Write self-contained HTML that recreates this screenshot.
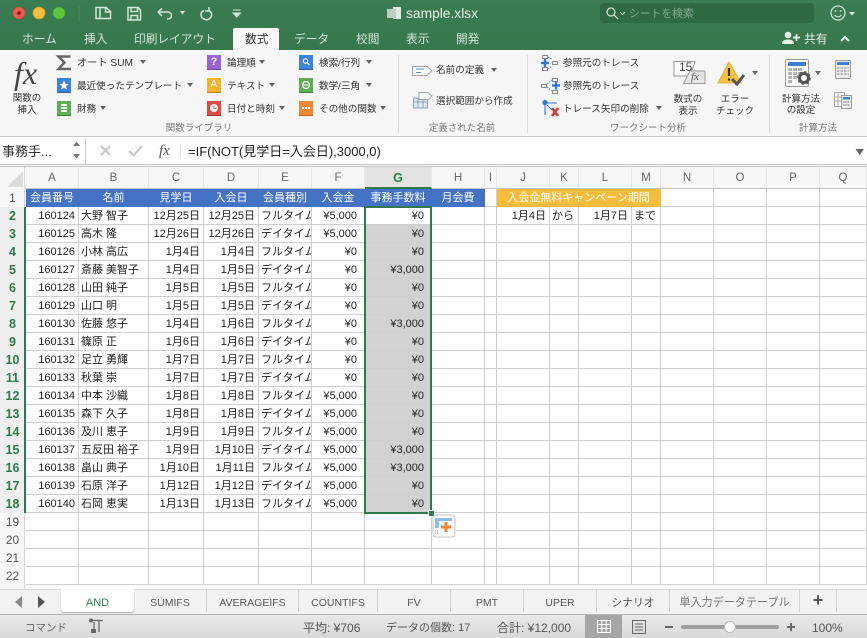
<!DOCTYPE html>
<html lang="ja"><head><meta charset="utf-8"><title>sample.xlsx</title>
<style>
*{box-sizing:border-box}
html,body{margin:0;padding:0;width:867px;height:638px;overflow:hidden;background:#fff}
body{position:relative;font-family:"Liberation Sans","Noto Sans CJK JP",sans-serif;color:#222}
.a{position:absolute}
.t{position:absolute;white-space:nowrap;line-height:14px;font-size:10px;color:#333}
.c{transform:translateX(-50%);text-align:center}
.tab{position:absolute;top:33px;font-size:11.7px;line-height:14px;color:#d5e6da;white-space:nowrap}
.g{position:absolute;top:122px;font-size:9.5px;line-height:14px;color:#777;white-space:nowrap;transform:translateX(-50%)}
.dd{position:absolute;width:0;height:0;border-left:3px solid transparent;border-right:3px solid transparent;border-top:4px solid #666}
.ch{position:absolute;top:167px;height:21px;line-height:22px;text-align:center;font-size:11.5px;color:#666;border-right:1px solid #e8e8e8}
.rh{position:absolute;left:0;width:25px;height:18px;line-height:18px;text-align:center;font-size:12px;color:#555}
.rh.s{font-weight:bold;color:#2f7a4c;font-size:12.5px;line-height:19px}
table{position:absolute;left:26px;top:189px;border-collapse:separate;border-spacing:0;table-layout:fixed;width:841px}
td{height:18px;padding:2px 2px 0;border-right:1px solid #cfcfcf;border-bottom:1px solid #cfcfcf;font-size:11px;line-height:15px;white-space:nowrap;overflow:hidden;color:#222}
td.r{text-align:right;padding-right:3px}
td.h{background:#4472c4;color:#fff;text-align:center;border-right-color:#4472c4;border-bottom-color:#4472c4;padding:2px 0 0}
td.o{background:#f6bd3c;color:#fff;text-align:center;border-color:#f6bd3c;padding:2px 0 0}
td.s{background:#d2d2d2;text-align:right;padding-right:7px}
td.w{text-align:right;padding-right:7px}
.st{position:absolute;top:589px;height:23px;line-height:28px;font-size:10.5px;color:#555;text-align:center;white-space:nowrap;border-right:1px solid #d0d0d0;overflow:hidden}
.sb{position:absolute;top:621px;font-size:12px;line-height:14px;color:#555;white-space:nowrap}
.i{font-size:9.6px}
</style></head><body>

<!-- title + tabs -->
<div class="a" style="left:0;top:0;width:867px;height:50px;background:linear-gradient(#3b7c52,#37784d)"></div>
<div class="a" style="left:233px;top:28px;width:46px;height:22px;background:#f7f7f7;border-radius:2px 2px 0 0"></div>
<svg class="a" style="left:0;top:0" width="867" height="50" viewBox="0 0 867 50">
<circle cx="19" cy="13" r="6" fill="#ee5a52" stroke="#c9403a" stroke-width=".6"/><circle cx="19" cy="13" r="1.8" fill="#7a1c18"/>
<circle cx="39" cy="13" r="6" fill="#f8bb3b" stroke="#d79c2c" stroke-width=".6"/>
<circle cx="59" cy="13" r="6" fill="#5cc43d" stroke="#46a32e" stroke-width=".6"/>
<path d="M79 6V21" stroke="#4a8a60"/>
<g fill="none" stroke="#d6e6da" stroke-width="1.5">
<path d="M96 7.500H106L110.500 11.500V18.500H96ZM100 7.500V18.500M105.500 7.500V12H110.500"/>
<path d="M128 7.500H138L140.500 10V20H128ZM131 7.500V11.500H137.500V7.500M131 20V15.500H137.500V20"/>
<path d="M158 12L162 8.500M158 12L162 16M158 12H167Q171.500 12 171.500 15.500Q171.500 19 167 19"/>
<path d="M209 10.500Q212.500 13 211.500 16Q209.500 20.500 205 19.500Q200.500 18 201 14Q201.500 11.500 204 10.500M209 7V11H205"/>
</g>
<path d="M180 11H185L182.500 14.500Z" fill="#d6e6da"/>
<path d="M233 10H240.500M233 13H240.500L236.800 17Z" stroke="#d6e6da" fill="#d6e6da"/>
<rect x="393" y="7" width="8" height="12" fill="#dfe9e2"/><rect x="387" y="9" width="9" height="9" fill="#b9cfc0"/>
<rect x="600" y="3" width="214" height="20" rx="4" fill="#2f6a45"/>
<circle cx="611" cy="12" r="4" fill="none" stroke="#d6e6da" stroke-width="1.200"/><path d="M614 15L618 19" stroke="#d6e6da" stroke-width="1.200"/>
<path d="M620 12L622.500 14.500L625 12" fill="none" stroke="#d6e6da"/>
<circle cx="838" cy="13" r="7" fill="none" stroke="#d6e6da" stroke-width="1.200"/><circle cx="835.500" cy="11" r=".9" fill="#d6e6da"/><circle cx="840.500" cy="11" r=".9" fill="#d6e6da"/><path d="M834.500 15Q838 18.500 841.500 15" fill="none" stroke="#d6e6da"/>
<path d="M849 12H855L852 15.500Z" fill="#d6e6da"/>
<circle cx="788" cy="35" r="3.300" fill="#e8f0ea"/><path d="M782 44Q782 39.500 788 39.500Q794 39.500 794 44Z" fill="#e8f0ea"/><path d="M796.500 34V41M793 37.500H800" stroke="#e8f0ea" stroke-width="1.800"/>
<path d="M841 41L845 37L849 41" fill="none" stroke="#e8f0ea" stroke-width="2"/>
</svg>
<div class="t" style="left:406px;top:6px;font-size:13.8px;line-height:16px;color:#e9f1eb">sample.xlsx</div>
<div class="t" style="left:629px;top:7px;font-size:10.8px;color:#84ab92">シートを検索</div>
<div class="tab" style="left:22px">ホーム</div>
<div class="tab" style="left:84px">挿入</div>
<div class="tab" style="left:134px">印刷レイアウト</div>
<div class="tab" style="left:245px;color:#333">数式</div>
<div class="tab" style="left:294px">データ</div>
<div class="tab" style="left:356px">校閲</div>
<div class="tab" style="left:406px">表示</div>
<div class="tab" style="left:456px">開発</div>
<div class="tab" style="left:804px;color:#e8f0ea">共有</div>

<!-- ribbon -->
<div class="a" style="left:0;top:50px;width:867px;height:87px;background:#f6f6f6;border-bottom:1px solid #c8c8c8"></div>
<div class="a" style="left:398px;top:55px;width:1px;height:78px;background:#dcdcdc"></div>
<div class="a" style="left:527px;top:55px;width:1px;height:78px;background:#dcdcdc"></div>
<div class="a" style="left:769px;top:55px;width:1px;height:78px;background:#dcdcdc"></div>
<div class="t" style="left:14px;top:55px;font-family:'Liberation Serif',serif;font-style:italic;font-size:32px;line-height:36px;color:#444">fx</div>

<svg class="a" style="left:0;top:50px" width="867" height="87" viewBox="0 50 867 87">
<path d="M70.500 56.500H58.500L64.500 62.500L58.500 69H71" fill="none" stroke="#666" stroke-width="2.500"/>
<g>
<rect x="57" y="78" width="14" height="14" fill="#3d83d9"/><path d="M57 92.500H71" stroke="#2b5c99" stroke-width="1"/><path d="M64 80.500L65.300 83.800L68.800 84L66.100 86.200L67 89.500L64 87.700L61 89.500L61.900 86.200L59.200 84L62.700 83.800Z" fill="#fff"/>
<rect x="57" y="101" width="14" height="14" fill="#5fae57"/><path d="M57 115.500H71" stroke="#3c7f38"/><rect x="61" y="104" width="6" height="2" rx="1" fill="#fff"/><rect x="61" y="107" width="6" height="2" rx="1" fill="#fff"/><rect x="61" y="110" width="6" height="2" rx="1" fill="#fff"/>
<rect x="207" y="55" width="14" height="14" fill="#9a64cf"/><path d="M207 69.500H221" stroke="#6e4499"/>
<rect x="207" y="78" width="14" height="14" fill="#f4b32f"/><path d="M207 92.500H221" stroke="#b9851c"/>
<rect x="207" y="101" width="14" height="14" fill="#df4c45"/><path d="M207 115.500H221" stroke="#a3302b"/><circle cx="214" cy="108" r="4" fill="#fff"/><path d="M214 105.500V108.300H216.500" fill="none" stroke="#df4c45"/>
<rect x="299" y="55" width="14" height="14" fill="#3d83d9"/><path d="M299 69.500H313" stroke="#2b5c99"/><circle cx="305.500" cy="61" r="2.200" fill="none" stroke="#fff" stroke-width="1.200"/><path d="M307 62.800L309.500 65" stroke="#fff" stroke-width="1.200"/>
<rect x="299" y="78" width="14" height="14" fill="#5fae57"/><path d="M299 92.500H313" stroke="#3c7f38"/><ellipse cx="306" cy="85" rx="3.500" ry="3.500" fill="none" stroke="#fff" stroke-width="1.200"/><path d="M302.500 85H309.500" stroke="#fff"/>
<rect x="299" y="101" width="14" height="14" fill="#ee8a35"/><path d="M299 115.500H313" stroke="#b8651f"/><path d="M302 108h2M305 108h2M308 108h2" stroke="#fff" stroke-width="2"/>
</g>
<path d="M412.500 66.500H427L432 70.500L427 75.500H412.500Z" fill="#fff" stroke="#9aa7b3"/><path d="M416 69H424M416 72.500H421" stroke="#4a8ad4"/>
<rect x="413.500" y="98" width="14" height="10" fill="#dfe8f2" stroke="#8fa3b7"/><path d="M413.500 102H427.500M418 98V108M423 98V108" stroke="#8fa3b7" fill="none"/><path d="M419 92.500H428L432 96L428 99.500H419Z" fill="#fff" stroke="#9aa7b3"/>
<g fill="none" stroke="#888" stroke-width="1"><rect x="542.500" y="55.500" width="5" height="3"/><rect x="552.500" y="61.500" width="5" height="3"/><rect x="542.500" y="67.500" width="5" height="3"/>
<rect x="552.500" y="78.500" width="5" height="3"/><rect x="541.500" y="84.500" width="5" height="3"/><rect x="552.500" y="90.500" width="5" height="3"/>
<path d="M548 57L552 59M548 69L552 66M547 84L552 80M547 87L552 91" stroke="#4a8ad4" stroke-dasharray="1.500 1"/></g>
<path d="M541 63H549M545 59V67" stroke="#2f79cf" stroke-width="2.400"/>
<path d="M552 85.500H560M556 81.500V89.500" stroke="#2f79cf" stroke-width="2.400"/>
<circle cx="545" cy="102.500" r="2.600" fill="#2f79cf"/><path d="M547 103H557M545 104V115M547 105L552 110" stroke="#2f79cf" stroke-width="1.100"/>
<path d="M552 108L558 116M558 108L552 116" stroke="#cf3a32" stroke-width="2.600"/>
<path d="M674 61.500H695L690 76H674Z" fill="#fff" stroke="#9a9a9a"/>
<path d="M690 71H705V83.500H683.500Z" fill="#e6e6e6" stroke="#9a9a9a"/>
<path d="M729 62L741 83H718Z" fill="#f6c342" stroke="#e2b136" stroke-linejoin="round"/><path d="M729 68V76" stroke="#333" stroke-width="2.200"/><circle cx="729" cy="79.500" r="1.200" fill="#333"/>
<path d="M732 79L737 84L744 75" fill="none" stroke="#555" stroke-width="3"/>
<rect x="785.500" y="59.500" width="23" height="27" rx="1.500" fill="#f8f8f8" stroke="#999"/><rect x="788" y="62" width="18" height="4" fill="#3d7fcb"/>
<g fill="#b5b5b5"><rect x="788" y="68" width="4" height="3"/><rect x="793" y="68" width="4" height="3"/><rect x="798" y="68" width="4" height="3"/><rect x="788" y="72" width="4" height="3"/><rect x="793" y="72" width="4" height="3"/><rect x="798" y="72" width="4" height="3"/><rect x="788" y="76" width="4" height="3"/><rect x="793" y="76" width="4" height="3"/><rect x="788" y="80" width="4" height="3"/></g>
<circle cx="804" cy="78" r="4.500" fill="none" stroke="#555" stroke-width="3"/><circle cx="804" cy="78" r="6" fill="none" stroke="#555" stroke-width="1.800" stroke-dasharray="2.300 2.400"/>
<rect x="835.500" y="60.500" width="15" height="18" rx="1" fill="#ececec" stroke="#999"/><rect x="837" y="62" width="12" height="3" fill="#3d7fcb"/><path d="M837 68H849M837 71H849M837 74H849" stroke="#aaa" stroke-width="1.500" stroke-dasharray="2.500 1"/>
<rect x="834.500" y="92.500" width="10" height="14" fill="#fff" stroke="#aaa"/><path d="M834.500 97H844.500M834.500 101H844.500M838 92.500V106" stroke="#aaa"/>
<rect x="841.500" y="95.500" width="10" height="13" fill="#ececec" stroke="#999"/><rect x="843" y="97" width="7" height="2.500" fill="#3d7fcb"/><path d="M843 102H850M843 105H850" stroke="#999" stroke-width="1.500" stroke-dasharray="1.500 .8"/>
</svg>

<div class="t" style="left:210.500px;top:55px;color:#fff;font-weight:bold;font-size:11px">?</div>
<div class="t" style="left:210.500px;top:78px;color:#fff;font-size:10px">A</div>
<div class="t" style="left:679px;top:60px;font-size:12px;color:#444">15</div>
<div class="t" style="left:691px;top:70px;font-family:'Liberation Serif',serif;font-style:italic;font-size:11px;color:#555">fx</div>

<div class="t c" style="left:27px;top:93px;line-height:11.500px;font-size:9.500px">関数の<br>挿入</div>
<div class="t i" style="left:77px;top:57px;font-size:10.200px">オート SUM</div><div class="dd" style="left:140px;top:60px"></div>
<div class="t i" style="left:77px;top:80px">最近使ったテンプレート</div><div class="dd" style="left:187px;top:83px"></div>
<div class="t i" style="left:77px;top:103px">財務</div><div class="dd" style="left:100px;top:106px"></div>
<div class="t i" style="left:227px;top:57px">論理順</div><div class="dd" style="left:259px;top:60px"></div>
<div class="t i" style="left:227px;top:80px">テキスト</div><div class="dd" style="left:269px;top:83px"></div>
<div class="t i" style="left:227px;top:103px">日付と時刻</div><div class="dd" style="left:279px;top:106px"></div>
<div class="t i" style="left:319px;top:57px">検索/行列</div><div class="dd" style="left:366px;top:60px"></div>
<div class="t i" style="left:319px;top:80px">数学/三角</div><div class="dd" style="left:366px;top:83px"></div>
<div class="t i" style="left:319px;top:103px">その他の関数</div><div class="dd" style="left:380px;top:106px"></div>
<div class="g" style="left:199px">関数ライブラリ</div>
<div class="t i" style="left:436px;top:64px">名前の定義</div><div class="dd" style="left:491px;top:68px"></div>
<div class="t i" style="left:436px;top:95px">選択範囲から作成</div>
<div class="g" style="left:462px">定義された名前</div>
<div class="t i" style="left:563px;top:57px">参照元のトレース</div>
<div class="t i" style="left:563px;top:80px">参照先のトレース</div>
<div class="t i" style="left:563px;top:103px">トレース矢印の削除</div><div class="dd" style="left:656px;top:106px"></div>
<div class="t c" style="left:688px;top:94px;line-height:12px;font-size:9.500px">数式の<br>表示</div>
<div class="t c" style="left:735px;top:94px;line-height:12px;font-size:9.500px">エラー<br>チェック</div><div class="dd" style="left:752px;top:71px"></div>
<div class="t c" style="left:801px;top:93.500px;line-height:11.500px;font-size:9.500px">計算方法<br>の設定</div><div class="dd" style="left:815px;top:71px"></div>
<div class="g" style="left:648px">ワークシート分析</div>
<div class="g" style="left:818px">計算方法</div>

<!-- formula bar -->
<div class="a" style="left:0;top:138px;width:867px;height:26px;background:#fff"></div>
<div class="a" style="left:0;top:164px;width:867px;height:3px;border-top:1px solid #c4c4c4;border-bottom:1px solid #c4c4c4;background:#f4f4f4"></div>
<div class="a" style="left:85px;top:138px;width:1px;height:26px;background:#d0d0d0"></div>
<div class="t" style="left:2px;top:145px;font-size:13px;color:#333">事務手...</div>
<svg class="a" style="left:0;top:138px" width="867" height="26" viewBox="0 138 867 26">
<path d="M73 146L76.500 141.500L80 146ZM73 154L76.500 158.500L80 154Z" fill="#777"/>
<path d="M101 146L110 155M110 146L101 155" stroke="#c6c6c6" stroke-width="2"/>
<path d="M129 151L133.500 155.500L142 146" fill="none" stroke="#c6c6c6" stroke-width="2"/>
<path d="M180.500 145V157" stroke="#ddd"/>
<path d="M855.500 149H864L859.700 155Z" fill="#666"/>
</svg>
<div class="t" style="left:159px;top:142px;font-family:'Liberation Serif',serif;font-style:italic;font-size:15px;line-height:18px;color:#555">fx</div>
<div class="t" style="left:188px;top:145px;font-size:13px;color:#222">=IF(NOT(見学日=入会日),3000,0)</div>

<!-- column headers -->
<div class="a" style="left:0;top:167px;width:867px;height:22px;background:#f7f7f7;border-bottom:1px solid #c4c4c4"></div>
<div class="a" style="left:0;top:167px;width:25px;height:422px;background:#f7f7f7;border-right:1px solid #d8d8d8"></div>
<svg class="a" style="left:0;top:167px" width="25" height="22"><path d="M23 4V20H7Z" fill="#dcdcdc"/></svg>
<div class="ch" style="left:26px;width:53px">A</div>
<div class="ch" style="left:79px;width:70px">B</div>
<div class="ch" style="left:149px;width:55px">C</div>
<div class="ch" style="left:204px;width:55px">D</div>
<div class="ch" style="left:259px;width:53px">E</div>
<div class="ch" style="left:312px;width:53px">F</div>
<div class="ch" style="left:365px;width:67px;background:#e3e3e3;color:#2f7a4c;font-weight:bold;font-size:12.500px;height:22px;border-bottom:2px solid #2f7a4c">G</div>
<div class="ch" style="left:432px;width:53px">H</div>
<div class="ch" style="left:485px;width:12px">I</div>
<div class="ch" style="left:497px;width:53px">J</div>
<div class="ch" style="left:550px;width:29px">K</div>
<div class="ch" style="left:579px;width:53px">L</div>
<div class="ch" style="left:632px;width:29px">M</div>
<div class="ch" style="left:661px;width:53px">N</div>
<div class="ch" style="left:714px;width:53px">O</div>
<div class="ch" style="left:767px;width:53px">P</div>
<div class="ch" style="left:820px;width:47px">Q</div>

<!-- row headers -->
<div class="a" style="left:0;top:207px;width:25px;height:306px;background:#efefef"></div>
<div class="rh" style="top:189px">1</div>
<div class="rh s" style="top:207px">2</div><div class="rh s" style="top:225px">3</div><div class="rh s" style="top:243px">4</div><div class="rh s" style="top:261px">5</div><div class="rh s" style="top:279px">6</div><div class="rh s" style="top:297px">7</div><div class="rh s" style="top:315px">8</div><div class="rh s" style="top:333px">9</div><div class="rh s" style="top:351px">10</div><div class="rh s" style="top:369px">11</div><div class="rh s" style="top:387px">12</div><div class="rh s" style="top:405px">13</div><div class="rh s" style="top:423px">14</div><div class="rh s" style="top:441px">15</div><div class="rh s" style="top:459px">16</div><div class="rh s" style="top:477px">17</div><div class="rh s" style="top:495px">18</div>
<div class="rh" style="top:513px">19</div><div class="rh" style="top:531px">20</div><div class="rh" style="top:549px">21</div><div class="rh" style="top:567px">22</div>

<!-- grid -->
<table>
<colgroup><col style="width:53px"><col style="width:70px"><col style="width:55px"><col style="width:55px"><col style="width:53px"><col style="width:53px"><col style="width:67px"><col style="width:53px"><col style="width:12px"><col style="width:53px"><col style="width:29px"><col style="width:53px"><col style="width:29px"><col style="width:53px"><col style="width:53px"><col style="width:53px"><col style="width:47px"></colgroup>
<tr><td class="h">会員番号</td><td class="h">名前</td><td class="h">見学日</td><td class="h">入会日</td><td class="h">会員種別</td><td class="h">入会金</td><td class="h">事務手数料</td><td class="h">月会費</td><td></td><td class="o" colspan="4">入会金無料キャンペーン期間</td><td></td><td></td><td></td><td></td></tr>
<tr><td class="r">160124</td><td>大野 智子</td><td class="r">12月25日</td><td class="r">12月25日</td><td>フルタイム</td><td class="w">¥5,000</td><td class="w">¥0</td><td></td><td></td><td class="r">1月4日</td><td>から</td><td class="r">1月7日</td><td>まで</td><td></td><td></td><td></td><td></td></tr>
<tr><td class="r">160125</td><td>高木 隆</td><td class="r">12月26日</td><td class="r">12月26日</td><td>デイタイム</td><td class="w">¥5,000</td><td class="s">¥0</td><td></td><td></td><td></td><td></td><td></td><td></td><td></td><td></td><td></td><td></td></tr>
<tr><td class="r">160126</td><td>小林 高広</td><td class="r">1月4日</td><td class="r">1月4日</td><td>フルタイム</td><td class="w">¥0</td><td class="s">¥0</td><td></td><td></td><td></td><td></td><td></td><td></td><td></td><td></td><td></td><td></td></tr>
<tr><td class="r">160127</td><td>斎藤 美智子</td><td class="r">1月4日</td><td class="r">1月5日</td><td>デイタイム</td><td class="w">¥0</td><td class="s">¥3,000</td><td></td><td></td><td></td><td></td><td></td><td></td><td></td><td></td><td></td><td></td></tr>
<tr><td class="r">160128</td><td>山田 純子</td><td class="r">1月5日</td><td class="r">1月5日</td><td>フルタイム</td><td class="w">¥0</td><td class="s">¥0</td><td></td><td></td><td></td><td></td><td></td><td></td><td></td><td></td><td></td><td></td></tr>
<tr><td class="r">160129</td><td>山口 明</td><td class="r">1月5日</td><td class="r">1月5日</td><td>デイタイム</td><td class="w">¥0</td><td class="s">¥0</td><td></td><td></td><td></td><td></td><td></td><td></td><td></td><td></td><td></td><td></td></tr>
<tr><td class="r">160130</td><td>佐藤 悠子</td><td class="r">1月4日</td><td class="r">1月6日</td><td>フルタイム</td><td class="w">¥0</td><td class="s">¥3,000</td><td></td><td></td><td></td><td></td><td></td><td></td><td></td><td></td><td></td><td></td></tr>
<tr><td class="r">160131</td><td>篠原 正</td><td class="r">1月6日</td><td class="r">1月6日</td><td>デイタイム</td><td class="w">¥0</td><td class="s">¥0</td><td></td><td></td><td></td><td></td><td></td><td></td><td></td><td></td><td></td><td></td></tr>
<tr><td class="r">160132</td><td>足立 勇輝</td><td class="r">1月7日</td><td class="r">1月7日</td><td>フルタイム</td><td class="w">¥0</td><td class="s">¥0</td><td></td><td></td><td></td><td></td><td></td><td></td><td></td><td></td><td></td><td></td></tr>
<tr><td class="r">160133</td><td>秋葉 崇</td><td class="r">1月7日</td><td class="r">1月7日</td><td>デイタイム</td><td class="w">¥0</td><td class="s">¥0</td><td></td><td></td><td></td><td></td><td></td><td></td><td></td><td></td><td></td><td></td></tr>
<tr><td class="r">160134</td><td>中本 沙織</td><td class="r">1月8日</td><td class="r">1月8日</td><td>フルタイム</td><td class="w">¥5,000</td><td class="s">¥0</td><td></td><td></td><td></td><td></td><td></td><td></td><td></td><td></td><td></td><td></td></tr>
<tr><td class="r">160135</td><td>森下 久子</td><td class="r">1月8日</td><td class="r">1月8日</td><td>デイタイム</td><td class="w">¥5,000</td><td class="s">¥0</td><td></td><td></td><td></td><td></td><td></td><td></td><td></td><td></td><td></td><td></td></tr>
<tr><td class="r">160136</td><td>及川 恵子</td><td class="r">1月9日</td><td class="r">1月9日</td><td>フルタイム</td><td class="w">¥5,000</td><td class="s">¥0</td><td></td><td></td><td></td><td></td><td></td><td></td><td></td><td></td><td></td><td></td></tr>
<tr><td class="r">160137</td><td>五反田 裕子</td><td class="r">1月9日</td><td class="r">1月10日</td><td>デイタイム</td><td class="w">¥5,000</td><td class="s">¥3,000</td><td></td><td></td><td></td><td></td><td></td><td></td><td></td><td></td><td></td><td></td></tr>
<tr><td class="r">160138</td><td>畠山 典子</td><td class="r">1月10日</td><td class="r">1月11日</td><td>フルタイム</td><td class="w">¥5,000</td><td class="s">¥3,000</td><td></td><td></td><td></td><td></td><td></td><td></td><td></td><td></td><td></td><td></td></tr>
<tr><td class="r">160139</td><td>石原 洋子</td><td class="r">1月12日</td><td class="r">1月12日</td><td>デイタイム</td><td class="w">¥5,000</td><td class="s">¥0</td><td></td><td></td><td></td><td></td><td></td><td></td><td></td><td></td><td></td><td></td></tr>
<tr><td class="r">160140</td><td>石岡 恵実</td><td class="r">1月13日</td><td class="r">1月13日</td><td>フルタイム</td><td class="w">¥5,000</td><td class="s">¥0</td><td></td><td></td><td></td><td></td><td></td><td></td><td></td><td></td><td></td><td></td></tr>
<tr><td></td><td></td><td></td><td></td><td></td><td></td><td></td><td></td><td></td><td></td><td></td><td></td><td></td><td></td><td></td><td></td><td></td></tr>
<tr><td></td><td></td><td></td><td></td><td></td><td></td><td></td><td></td><td></td><td></td><td></td><td></td><td></td><td></td><td></td><td></td><td></td></tr>
<tr><td></td><td></td><td></td><td></td><td></td><td></td><td></td><td></td><td></td><td></td><td></td><td></td><td></td><td></td><td></td><td></td><td></td></tr>
<tr><td></td><td></td><td></td><td></td><td></td><td></td><td></td><td></td><td></td><td></td><td></td><td></td><td></td><td></td><td></td><td></td><td></td></tr>
</table>

<!-- row header selection bar -->
<div class="a" style="left:24px;top:207px;width:2px;height:306px;background:#2f7a4c"></div>
<!-- selection -->
<div class="a" style="left:364px;top:206px;width:68px;height:308px;border:2px solid #2f7a4c"></div>
<div class="a" style="left:428px;top:510px;width:7px;height:7px;background:#2f7a4c;border:1px solid #fff"></div>
<!-- paste options -->
<svg class="a" style="left:432px;top:514px" width="24" height="24" viewBox="0 0 24 24">
<rect x="1" y="1" width="22" height="22" rx="3" fill="#fafafa" stroke="#c9c9c9"/>
<path d="M3 4H20V7H7V14H3Z" fill="#8cbcea"/>
<path d="M14 8V18M9 13H19" stroke="#ee8a35" stroke-width="3"/>
<path d="M3 17h1M5 17h1M3 19h1M5 19h1" stroke="#888"/>
</svg>

<!-- sheet tabs -->
<div class="a" style="left:0;top:589px;width:867px;height:26px;background:#f2f2f2;border-top:1px solid #d8d8d8;border-bottom:1px solid #b4b4b4"></div>
<div class="a" style="left:61px;top:589px;width:73px;height:23px;background:#fff;border-radius:0 0 3px 3px;box-shadow:0 1px 1px #aaa;color:#2f7a4c;font-size:11px;line-height:28px;text-align:center">AND</div>
<svg class="a" style="left:0;top:591px" width="60" height="24"><path d="M22 5V17L15 11Z" fill="#8a8a8a"/><path d="M38 5V17L45 11Z" fill="#555"/></svg>
<div class="st" style="left:134px;width:73px">SUMIFS</div>
<div class="st" style="left:207px;width:92px">AVERAGEIFS</div>
<div class="st" style="left:299px;width:79px">COUNTIFS</div>
<div class="st" style="left:378px;width:73px">FV</div>
<div class="st" style="left:451px;width:73px">PMT</div>
<div class="st" style="left:524px;width:73px">UPER</div>
<div class="st" style="left:597px;width:73px;font-size:10.800px">シナリオ</div>
<div class="st" style="left:670px;width:130px;color:#777;font-size:11.100px">単入力データテーブル</div>
<div class="st" style="left:800px;width:37px;font-size:18px;line-height:22px;color:#555;font-weight:bold">+</div>

<!-- status bar -->
<div class="a" style="left:0;top:615px;width:867px;height:23px;background:linear-gradient(#e8e8e8,#d9d9d9)"></div>
<div class="sb" style="left:25px;font-size:10.500px;color:#666">コマンド</div>
<svg class="a" style="left:88px;top:617px" width="18" height="18" viewBox="0 0 18 18"><path d="M3 3.500H15M11 3.500V15M6 5V12" stroke="#666" stroke-width="1.300" fill="none"/><circle cx="3" cy="3.500" r="2" fill="#666"/><rect x="3" y="12" width="5" height="4" fill="#666"/></svg>
<div class="sb" style="left:303px">平均: ¥706</div>
<div class="sb" style="left:386px;font-size:11px">データの個数: 17</div>
<div class="sb" style="left:497px">合計: ¥12,000</div>
<div class="a" style="left:585px;top:615px;width:37px;height:23px;background:#a5a5a5"></div>
<svg class="a" style="left:585px;top:615px" width="282" height="23" viewBox="585 615 282 23">
<path d="M597.500 620.500H610.500V632.500H597.500ZM597.500 624.500H610.500M597.500 628.500H610.500M601.800 620.500V632.500M606.200 620.500V632.500" fill="none" stroke="#fff"/>
<path d="M632.500 620.500H645.500V633.500H632.500Z M635 624H643M635 627H643M635 630H643" fill="none" stroke="#666"/>
<path d="M665 627H673" stroke="#666" stroke-width="2"/>
<rect x="681" y="625" width="98" height="4" rx="2" fill="#a0a0a0"/>
<path d="M787 627H795M791 623V631" stroke="#666" stroke-width="2"/>
<circle cx="730" cy="627" r="5.500" fill="#fff" stroke="#bbb"/>
</svg>
<div class="sb" style="left:812px">100%</div>
</body></html>
